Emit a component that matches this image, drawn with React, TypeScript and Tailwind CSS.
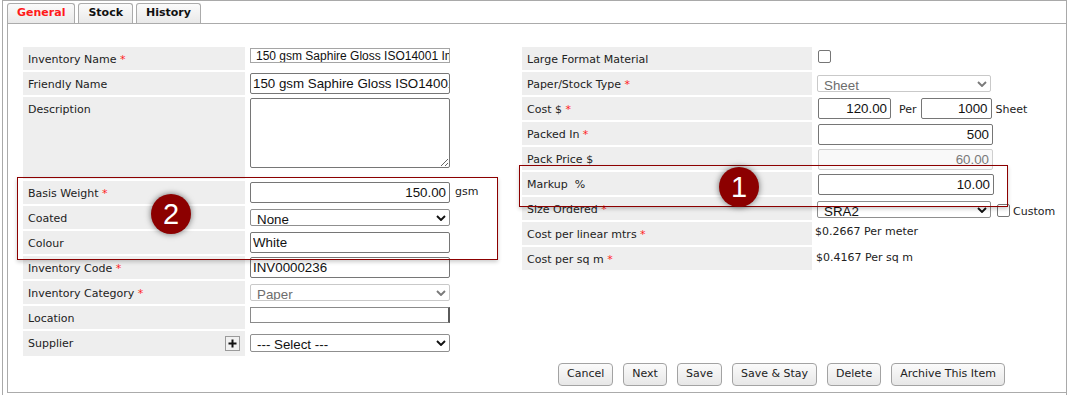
import React from 'react';

const INPUT_FONT = "font-['Liberation_Sans',Arial,sans-serif] text-[13.333px]";

const Req: React.FC = () => <span className="text-[#f22]"> *</span>;

const Chevron: React.FC<{ muted?: boolean }> = ({ muted }) => (
  <svg
    width="10"
    height="6"
    viewBox="0 0 10 6"
    className="pointer-events-none absolute right-[4px] top-1/2 -translate-y-1/2">
    <path d="M1 1l4 4 4-4" fill="none" stroke={muted ? '#7a7a7a' : '#111'} strokeWidth="1.9" />
  </svg>
);

const Select: React.FC<{ value: string; disabled?: boolean; className?: string }> = ({
  value,
  disabled,
  className = '',
}) => (
  <div className={`relative ${className}`}>
    <select
      disabled={disabled}
      defaultValue={value}
      className={`h-full w-full appearance-none rounded-[2px] border pl-[6px] opacity-100 ${INPUT_FONT} ${
        disabled ? 'border-[#c9c9c9] bg-white text-[#6d6d6d]' : 'border-[#8f8f8f] bg-white text-[#111]'
      }`}>
      <option>{value}</option>
    </select>
    <Chevron muted={disabled} />
  </div>
);

const TextInput: React.FC<{ value?: string; right?: boolean; className?: string; disabled?: boolean }> = ({
  value = '',
  right,
  className = '',
  disabled,
}) => (
  <input
    type="text"
    readOnly
    defaultValue={value}
    className={`block rounded-[2px] border ${INPUT_FONT} ${right ? 'pr-[3px] text-right' : 'pl-[2px]'} ${
      disabled ? 'border-[#cfcfcf] bg-[#f9f9f9] text-[#7a7a7a]' : 'border-[#767676] bg-white text-[#111]'
    } ${className}`}
  />
);

const Check: React.FC<{ className?: string }> = ({ className = '' }) => (
  <span className={`block h-[13px] w-[13px] rounded-[2px] border border-[#767676] bg-white ${className}`} />
);

const Row: React.FC<{ label: React.ReactNode; labelW: string; h?: string; children?: React.ReactNode; center?: boolean }> = ({
  label,
  labelW,
  h = 'h-[23px]',
  children,
  center,
}) => (
  <div className="mb-[2px] flex gap-[5px]">
    <div
      className={`${labelW} ${h} shrink-0 bg-[#eeeeee] pl-[5px] leading-[15px] ${
        center ? 'flex items-center justify-between pr-[5px]' : 'pt-[5px]'
      }`}>
      {label}
    </div>
    <div className="flex items-start">{children}</div>
  </div>
);

const BUTTONS = ['Cancel', 'Next', 'Save', 'Save & Stay', 'Delete', 'Archive This Item'];

const Badge: React.FC<{ n: string; className: string }> = ({ n, className }) => (
  <div
    className={`absolute flex h-[40px] w-[40px] items-center justify-center rounded-full bg-[#8c0000] font-['Liberation_Sans',Arial,sans-serif] text-[29px] leading-none text-white shadow-[0_0_6px_rgba(0,0,0,0.55)] ${className}`}>
    {n}
  </div>
);

export default function App() {
  const L = 'w-[222px]';
  const R = 'w-[290px]';

  return (
    <div className="relative h-[395px] w-[1069px] overflow-hidden bg-white font-['DejaVu_Sans',Verdana,sans-serif] text-[11px] text-[#222]">
      <div className="ml-[2px] h-[395px] w-[1065px] border-x border-t border-[#a9a9a9]">
        <div className="flex h-[22px] items-end gap-[3px] pl-[4px]">
          {['General', 'Stock', 'History'].map((t, i) => (
            <div
              key={t}
              className={`flex h-[20px] items-center rounded-t-[3px] border-x border-t border-[#ababab] bg-gradient-to-b from-[#fbfbfb] to-[#e9e9e9] px-[9px] font-bold ${
                i === 0 ? 'text-[#ff1a1a]' : 'text-[#111]'
              }`}>
              {t}
            </div>
          ))}
        </div>

        <div className="ml-[4px] h-[370px] border-b border-l border-t border-[#ababab] pl-[15px] pt-[23px]">
          <div className="flex">
            {/* left column */}
            <div className="w-[499px] shrink-0">
              <Row labelW={L} label={<>Inventory Name<Req /></>}>
                <input
                  type="text"
                  readOnly
                  defaultValue="150 gsm Saphire Gloss ISO14001 Imported"
                  className="mt-[1px] block h-[15px] w-[200px] border border-[#a5a5a5] bg-white pl-[5px] font-['Liberation_Sans',Arial,sans-serif] text-[12px] text-[#111]"
                />
              </Row>
              <Row labelW={L} label="Friendly Name">
                <TextInput value="150 gsm Saphire Gloss ISO14001 Imported" className="mt-[1px] h-[21px] w-[200px]" />
              </Row>
              <Row labelW={L} h="h-[82px]" label="Description">
                <textarea
                  readOnly
                  className="mt-[1px] block h-[70px] w-[200px] resize rounded-[2px] border border-[#767676] bg-white"
                />
              </Row>
              <Row labelW={L} label={<>Basis Weight<Req /></>}>
                <TextInput value="150.00" right className="mt-[1px] h-[21px] w-[200px]" />
                <span className="ml-[5px] pt-[3px] leading-[15px]">gsm</span>
              </Row>
              <Row labelW={L} label="Coated">
                <Select value="None" className="mt-[3px] h-[17px] w-[200px]" />
              </Row>
              <Row labelW={L} label="Colour">
                <TextInput value="White" className="mt-[1px] h-[21px] w-[200px]" />
              </Row>
              <Row labelW={L} label={<>Inventory Code<Req /></>}>
                <TextInput value="INV0000236" className="mt-[1px] h-[21px] w-[200px]" />
              </Row>
              <Row labelW={L} label={<>Inventory Category<Req /></>}>
                <Select value="Paper" disabled className="mt-[3px] h-[17px] w-[200px]" />
              </Row>
              <Row labelW={L} label="Location">
                <input
                  type="text"
                  readOnly
                  className="mt-[1px] block h-[16px] w-[200px] border border-[#8a8a8a] border-r-2 border-r-[#5a5a5a] bg-white"
                />
              </Row>
              <Row
                labelW={L}
                h="h-[25px]"
                center
                label={
                  <>
                    <span>Supplier</span>
                    <span className="flex h-[15px] w-[15px] items-center justify-center border border-[#9a9a9a] bg-[#f1f1f1]">
                      <svg width="9" height="9" viewBox="0 0 9 9">
                        <path d="M4.5 0.5v8M0.5 4.5h8" stroke="#111" strokeWidth="2" />
                      </svg>
                    </span>
                  </>
                }>
                <Select value="--- Select ---" className="mt-[3px] h-[18px] w-[200px]" />
              </Row>
            </div>

            {/* right column */}
            <div className="flex-1">
              <Row labelW={R} label="Large Format Material">
                <Check className="mt-[3px] ml-[1px]" />
              </Row>
              <Row labelW={R} label={<>Paper/Stock Type<Req /></>}>
                <Select value="Sheet" disabled className="mt-[3px] h-[17px] w-[174px]" />
              </Row>
              <Row labelW={R} label={<>Cost $<Req /></>}>
                <TextInput value="120.00" right className="ml-[1px] mt-[1px] h-[21px] w-[73px]" />
                <span className="ml-[8px] pt-[5px] leading-[15px]">Per</span>
                <TextInput value="1000" right className="ml-[4px] mt-[1px] h-[21px] w-[71px]" />
                <span className="ml-[4px] pt-[5px] leading-[15px]">Sheet</span>
              </Row>
              <Row labelW={R} label={<>Packed In<Req /></>}>
                <TextInput value="500" right className="ml-[1px] mt-[2px] h-[21px] w-[175px]" />
              </Row>
              <Row labelW={R} label="Pack Price $">
                <TextInput value="60.00" right disabled className="ml-[1px] mt-[2px] h-[21px] w-[175px]" />
              </Row>
              <Row labelW={R} label={<span className="whitespace-pre">Markup  %</span>}>
                <TextInput value="10.00" right className="ml-[1px] mt-[2px] h-[21px] w-[176px]" />
              </Row>
              <Row labelW={R} label={<>Size Ordered<Req /></>}>
                <Select value="SRA2" className="mt-[4px] h-[17px] w-[174px]" />
                <Check className="ml-[6px] mt-[7px]" />
                <span className="ml-[3px] pt-[7px] leading-[15px]">Custom</span>
              </Row>
              <Row labelW={R} label={<>Cost per linear mtrs<Req /></>}>
                <span className="-ml-[2px] pt-[2px] leading-[15px]">$0.2667 Per meter</span>
              </Row>
              <Row labelW={R} label={<>Cost per sq m<Req /></>}>
                <span className="-ml-[1px] pt-[3px] leading-[15px]">$0.4167 Per sq m</span>
              </Row>
            </div>
          </div>

          <div className="ml-[535px] mt-[5px] flex gap-[10px]">
            {BUTTONS.map((b) => (
              <button
                key={b}
                type="button"
                className="h-[23px] rounded-[4px] border border-[#a3a3a3] bg-gradient-to-b from-[#fbfbfb] to-[#e7e7e7] px-[8px] text-[11px] text-[#222]">
                {b}
              </button>
            ))}
          </div>
        </div>
      </div>

      {/* annotation overlays */}
      <div className="absolute left-[519px] top-[165px] h-[42px] w-[489px] border border-[#8c0000] shadow-[0_2px_4px_rgba(0,0,0,0.2)]" />
      <Badge n="1" className="left-[719px] top-[167px]" />
      <div className="absolute left-[17px] top-[177px] h-[83px] w-[481px] border border-[#8c0000] shadow-[0_2px_4px_rgba(0,0,0,0.2)]" />
      <Badge n="2" className="left-[151px] top-[194px]" />
    </div>
  );
}
